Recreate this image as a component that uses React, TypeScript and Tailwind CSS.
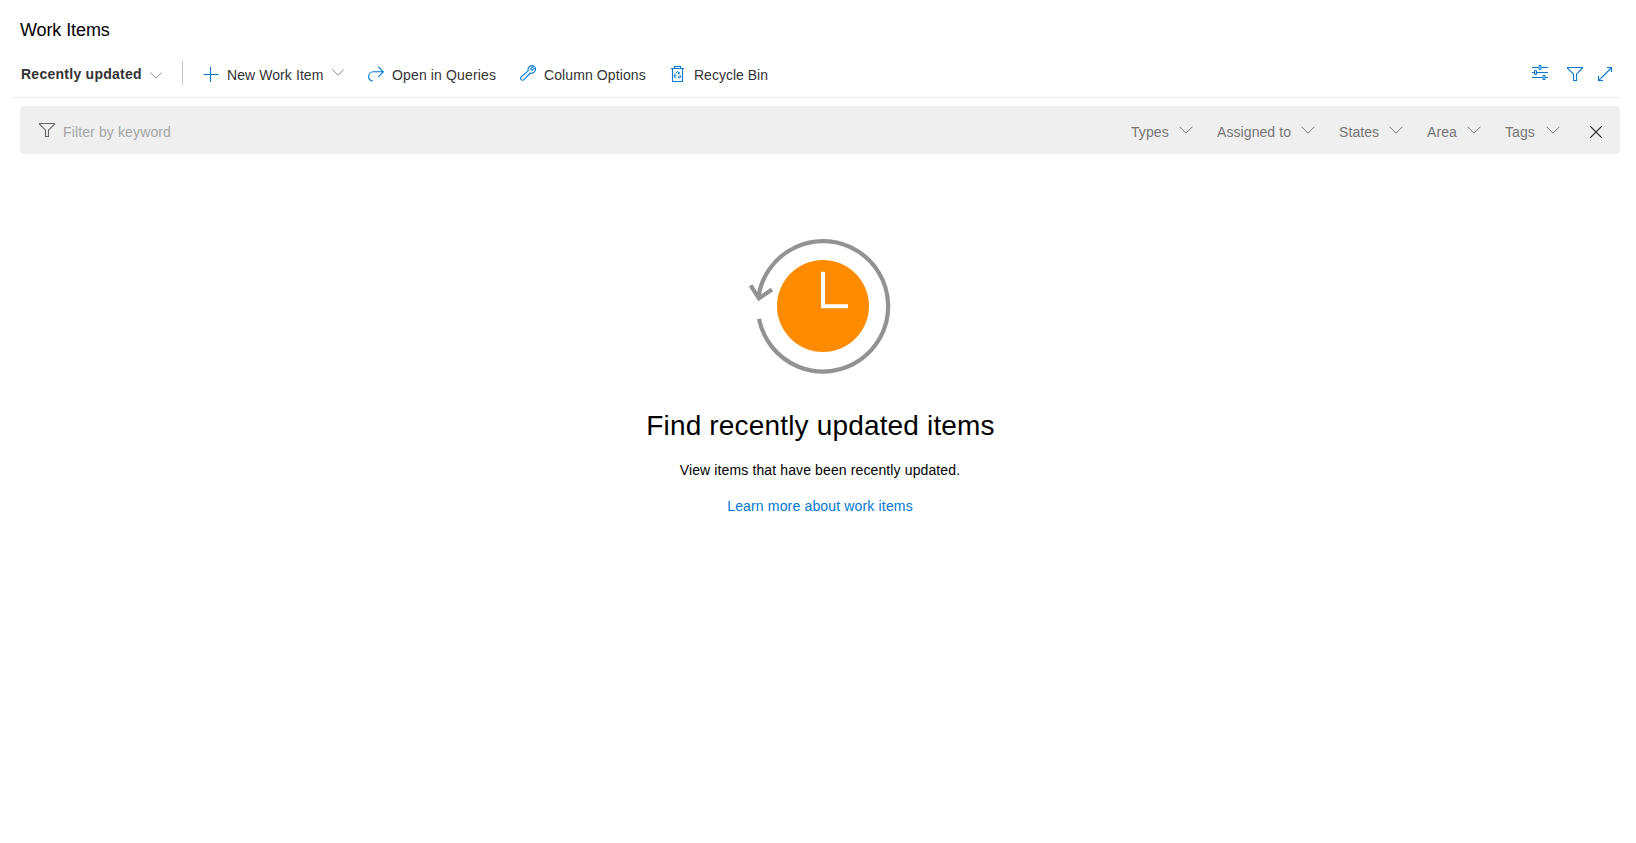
import type { ReactNode } from "react";

function Chevron({ className }: { className: string }) {
  return (
    <svg viewBox="0 0 14 8" fill="none" stroke="currentColor" strokeWidth="1" className={`h-2 w-3.5 shrink-0 ${className}`}>
      <path d="M.5.7 7 7.2 13.5.7" />
    </svg>
  );
}

function SmallChevron({ className }: { className: string }) {
  return (
    <svg viewBox="0 0 12 7" fill="none" stroke="currentColor" strokeWidth="1" className={`h-[7px] w-3 shrink-0 ${className}`}>
      <path d="M.3.5 6 6.2 11.7.5" />
    </svg>
  );
}

function Icon({ children, className }: { children: ReactNode; className: string }) {
  return (
    <svg viewBox="0 0 16 16" fill="none" stroke="currentColor" strokeWidth="1.1" className={`h-4 w-4 shrink-0 ${className}`}>
      {children}
    </svg>
  );
}

const funnel = <path d="M.5 1.5h15v.7L9.5 8.2v6.3h-3V8.2L.5 2.2z" />;

function Command({ icon, label, className, children }: { icon: ReactNode; label: string; className: string; children?: ReactNode }) {
  return (
    <button className={`flex h-6 items-center text-left text-[#333] ${className}`}>
      {icon}
      <span className="mt-1 whitespace-nowrap">{label}</span>
      {children}
    </button>
  );
}

function FilterMenu({ label, className }: { label: string; className: string }) {
  return (
    <button className={`flex shrink-0 items-center justify-between tracking-[0.08px] text-[#767676] ${className}`}>
      <span className="mt-1 whitespace-nowrap">{label}</span>
      <Chevron className="" />
    </button>
  );
}

export default function App() {
  return (
    <div className="h-[843px] w-full overflow-hidden bg-white font-['Liberation_Sans',Arial,sans-serif] text-sm leading-5 text-black">
      <h1 className="pt-[18px] pl-5 text-lg leading-6 tracking-[-0.1px]">Work Items</h1>

      <div className="mr-4 ml-3 flex h-14 items-start border-b border-[#eaeaea] pt-[19px]">
        <button className="flex h-6 w-[170px] items-center pl-[9px] font-bold tracking-[0.26px] text-[#333]">
          <span className="mt-0.5 w-[129px] text-left whitespace-nowrap">Recently updated</span>
          <SmallChevron className="mt-1 text-[#888]" />
        </button>
        <div className="h-6 w-px bg-[#c8c8c8]" />
        <Command
          className="ml-5 w-[165px] tracking-[0.08px]"
          label="New Work Item"
          icon={
            <Icon className="mr-2 mt-[3px] text-[#0078d4]">
              <path d="M.5 7.5h15M7.5 0v15" />
            </Icon>
          }
        >
          <SmallChevron className="mb-px ml-[9px] text-[#888]" />
        </Command>
        <Command
          className="w-[152px] tracking-[0.14px]"
          label="Open in Queries"
          icon={
            <Icon className="mr-2 mt-0.5 text-[#0078d4]">
              <path d="M10.2.7 15.3 5.8 10.2 10.9M15.3 5.8H5.2A4.7 4.7 0 0 0 .6 10.4c0 2.3 1.7 4.3 4.4 4.6" />
            </Icon>
          }
        />
        <Command
          className="w-[150px] tracking-[0.1px]"
          label="Column Options"
          icon={
            <Icon className="mr-2 text-[#0078d4]">
              <path d="M14 1.2A4 4 0 0 0 8.2 5.8L1.2 11.9a1.9 1.9 0 0 0 2.8 2.8L10.3 8a4 4 0 0 0 4.9-5.3L12.6 5.2l-1.5-.3-.3-1.5z" />
            </Icon>
          }
        />
        <Command
          className=""
          label="Recycle Bin"
          icon={
            <Icon className="mr-2 mt-0.5 text-[#0078d4]">
              <path d="M1 2.5h13M4.5 2.5V.5h6v2M2.5 2.5v13h10v-13" />
              <path d="M5.8 7.6 7.5 5.2 9.2 7.6M9.8 8.8l1.1 2.4H8.4M5.1 8.6 4 11.2H6.4M7.8 7.5H9.2V6M9.5 10 8.3 11.2 9.5 12.4M3.9 9.3 5.1 8.6 5.9 9.8" strokeWidth=".9" />
            </Icon>
          }
        />
        <div className="ml-auto flex h-6 text-[#0078d4]">
          <Icon className="mt-1 mr-[19px]">
            <path d="M0 2.5h6.5M9.5 2.5H16M0 7.5h2.2M5 7.5h11M0 12.5h10.5M13.5 12.5H16" />
            <rect x="7" y=".5" width="2" height="4" rx=".7" />
            <rect x="2.5" y="5.5" width="2" height="4" rx=".7" />
            <rect x="11" y="10.5" width="2" height="4" rx=".7" />
          </Icon>
          <Icon className="mt-[5px] mr-[15px]">{funnel}</Icon>
          <Icon className="mt-[5px] mr-1.5">
            <path d="M.8 14.4 13.7 1.5M9 1.5h4.5V6M.5 10v4.5H5" />
          </Icon>
        </div>
      </div>

      <div className="mt-2 mr-4 ml-5 flex h-12 items-center rounded bg-[#efefef]">
        <Icon className="mr-2 ml-[19px] text-[#666]">{funnel}</Icon>
        <input
          aria-label="Filter by keyword"
          placeholder="Filter by keyword"
          className="mt-1 min-w-0 flex-1 bg-transparent tracking-[0.13px] outline-none placeholder:text-[#a6a6a6]"
        />
        <FilterMenu label="Types" className="mr-6 w-[62px]" />
        <FilterMenu label="Assigned to" className="mr-6 w-[98px]" />
        <FilterMenu label="States" className="mr-6 w-16" />
        <FilterMenu label="Area" className="mr-6 w-[54px]" />
        <FilterMenu label="Tags" className="mr-[30px] w-[55px]" />
        <svg viewBox="0 0 12 12" fill="none" stroke="#222" strokeWidth="1.1" className="mt-1 mr-[18px] h-3 w-3">
          <path d="m.3.3 11.4 11.4M11.7.3.3 11.7" />
        </svg>
      </div>

      <main className="ml-1 flex flex-col items-center text-center">
        <svg viewBox="0 0 144 136" fill="none" className="mt-[84px] h-[136px] w-36">
          <circle cx="75" cy="68" r="46" fill="#ff8c00" />
          <path d="M75 33.7V68.3h25" stroke="#fff" strokeWidth="4" />
          <path d="M10.5 58.6A65.2 65.2 0 1 1 11 80.9" stroke="#929292" strokeWidth="4.2" />
          <path d="M2.6 47.3 10.9 60.4 24 51.6" stroke="#929292" strokeWidth="4.2" />
        </svg>
        <h2 className="mt-[34px] pl-px text-[28px] leading-9 tracking-[0.17px]">Find recently updated items</h2>
        <p className="mt-4 tracking-[0.12px]">View items that have been recently updated.</p>
        <a href="#" className="mt-4 tracking-[0.16px] text-[#0078d4]">Learn more about work items</a>
      </main>
    </div>
  );
}
